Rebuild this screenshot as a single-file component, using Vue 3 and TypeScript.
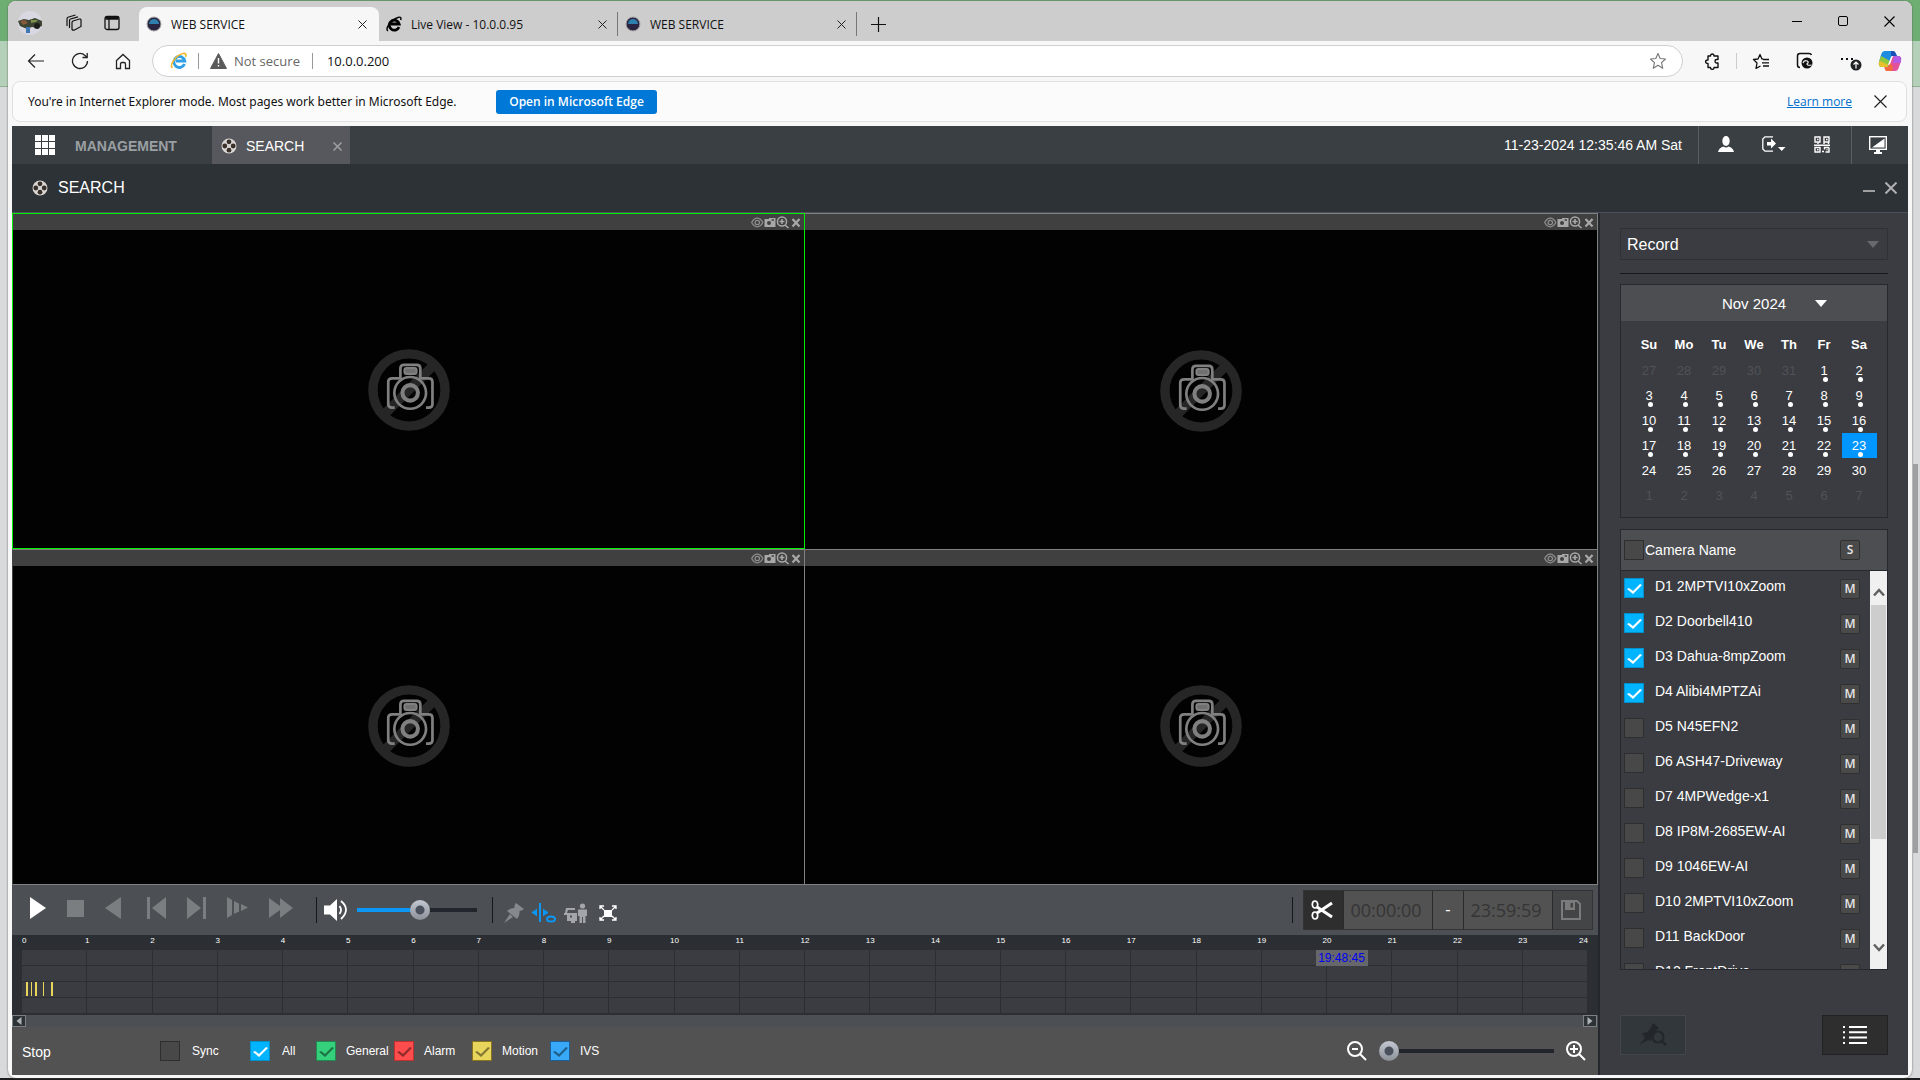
<script setup lang="ts">
import { computed, ref } from 'vue'

interface Camera {
  id: string
  name: string
  checked: boolean
}

interface Day {
  day: number
  out: boolean
  dot: boolean
  selected: boolean
}

const cameras = ref<Camera[]>([
  { id: 'D1', name: '2MPTVI10xZoom', checked: true },
  { id: 'D2', name: 'Doorbell410', checked: true },
  { id: 'D3', name: 'Dahua-8mpZoom', checked: true },
  { id: 'D4', name: 'Alibi4MPTZAi', checked: true },
  { id: 'D5', name: 'N45EFN2', checked: false },
  { id: 'D6', name: 'ASH47-Driveway', checked: false },
  { id: 'D7', name: '4MPWedge-x1', checked: false },
  { id: 'D8', name: 'IP8M-2685EW-AI', checked: false },
  { id: 'D9', name: '1046EW-AI', checked: false },
  { id: 'D10', name: '2MPTVI10xZoom', checked: false },
  { id: 'D11', name: 'BackDoor', checked: false },
  { id: 'D12', name: 'FrontDrive', checked: false },
])

const weekdays = ['Su', 'Mo', 'Tu', 'We', 'Th', 'Fr', 'Sa']

const weeks = computed<Day[][]>(() => {
  const days: Day[] = []
  for (let d = 27; d <= 31; d++) days.push({ day: d, out: true, dot: false, selected: false })
  for (let d = 1; d <= 30; d++) days.push({ day: d, out: false, dot: d <= 23, selected: d === 23 })
  for (let d = 1; d <= 7; d++) days.push({ day: d, out: true, dot: false, selected: false })
  return Array.from({ length: 6 }, (_, i) => days.slice(i * 7, i * 7 + 7))
})

const hours = Array.from({ length: 25 }, (_, i) => i)

// Recorded motion clips, in percent of the day.
const events = [
  { start: 0.26, width: 2 },
  { start: 0.58, width: 1 },
  { start: 0.83, width: 2 },
  { start: 1.34, width: 1 },
  { start: 1.85, width: 2 },
]

const filters = ref([
  { key: 'all', label: 'All', on: true },
  { key: 'general', label: 'General', on: true },
  { key: 'alarm', label: 'Alarm', on: true },
  { key: 'motion', label: 'Motion', on: true },
  { key: 'ivs', label: 'IVS', on: true },
])

const sync = ref(false)
const allCameras = ref(false)
const volume = ref(53)
const zoomLevel = ref(0)
const recordType = ref('Record')
const address = ref('10.0.0.200')
const clipStart = ref('00:00:00')
const clipEnd = ref('23:59:59')
</script>

<template>
  <div class="desktop">
    <div class="window">
      <header class="tabstrip">
        <div class="strip-tools">
          <button class="plain" aria-label="Profile">
            <svg width="26" height="26" viewBox="0 0 26 26">
              <circle cx="13" cy="13" r="12" fill="#d9d8e2" />
              <path d="M1 11 L7 9 L12 10 L18 8 L25 11 V16 L20 18 L15 17 L10 19 L3 16Z" fill="#3c4433" />
              <path d="M3 11 L8 10 L11 13 L6 15Z" fill="#8a5a3c" /><path d="M14 10 L21 10 L19 12 L14 13Z" fill="#7d9248" />
              <circle cx="20" cy="16" r="3" fill="#1c1d1a" /><rect x="9" y="17" width="4" height="6" fill="#3f78b5" />
            </svg>
          </button>
          <button class="plain" aria-label="Workspaces">
            <svg width="18" height="18" viewBox="0 0 18 18" fill="none" stroke="#111" stroke-width="1.2">
              <path d="M8 7 L14.500 5 Q16 4.800 16 6 V12.500 L9.500 16 Q8 16.500 7 15.500 V8.500 Q7 7.500 8 7Z" />
              <path d="M4.500 14 V6.500 Q4.500 5.300 5.500 5 L13 2.800" /><path d="M2 12 V5 Q2 3.500 3 3.200 L10.500 1" />
            </svg>
          </button>
          <button class="plain" aria-label="Tab actions">
            <svg width="16" height="16" viewBox="0 0 16 16" fill="none" stroke="#111" stroke-width="1.300">
              <rect x="1" y="1.500" width="14" height="13" rx="2" /><path d="M1.500 3 H14.500" stroke-width="3.500" /><path d="M5 4 V14" />
            </svg>
          </button>
        </div>
        <nav class="tabs">
          <div class="tab active">
            <svg class="fav" width="16" height="16" viewBox="0 0 16 16"><circle cx="8" cy="8" r="7" fill="#2b2440" stroke="#aaa" /><path d="M3 8 A5 5 0 0 1 13 8Z" fill="#2e7fae" /></svg>
            <span>WEB SERVICE</span>
            <button class="plain tab-x" aria-label="Close tab"><svg width="9" height="9" viewBox="0 0 9 9"><path d="M.5 .5 L8.500 8.500 M8.500 .5 L.5 8.500" stroke="#222" /></svg></button>
          </div>
          <div class="tab live">
            <svg class="fav" width="16" height="16" viewBox="0 0 16 16" fill="none">
              <path d="M13 11 A5 5 0 1 1 13.200 8 H5" stroke="#000" stroke-width="2.800" /><path d="M2 15 C-1 13 4 4 12 1.500 C15 .5 15.500 2 14.500 4" stroke="#000" stroke-width="1.400" />
            </svg>
            <span>Live View - 10.0.0.95</span>
            <button class="plain tab-x" aria-label="Close tab"><svg width="9" height="9" viewBox="0 0 9 9"><path d="M.5 .5 L8.500 8.500 M8.500 .5 L.5 8.500" stroke="#222" /></svg></button>
          </div>
          <div class="tab">
            <svg class="fav" width="16" height="16" viewBox="0 0 16 16"><circle cx="8" cy="8" r="7" fill="#2b2440" stroke="#aaa" /><path d="M3 8 A5 5 0 0 1 13 8Z" fill="#2e7fae" /></svg>
            <span>WEB SERVICE</span>
            <button class="plain tab-x" aria-label="Close tab"><svg width="9" height="9" viewBox="0 0 9 9"><path d="M.5 .5 L8.500 8.500 M8.500 .5 L.5 8.500" stroke="#222" /></svg></button>
          </div>
          <button class="plain new-tab" aria-label="New tab"><svg width="15" height="15" viewBox="0 0 15 15"><path d="M7.500 0 V15 M0 7.500 H15" stroke="#111" stroke-width="1.200" /></svg></button>
        </nav>
        <div class="win-buttons">
          <button class="plain" aria-label="Minimize"><svg width="10" height="10" viewBox="0 0 10 10"><path d="M0 5.500 H10" stroke="#000" /></svg></button>
          <button class="plain" aria-label="Maximize"><svg width="10" height="10" viewBox="0 0 10 10"><rect x=".5" y=".5" width="9" height="9" rx="1.500" fill="none" stroke="#000" /></svg></button>
          <button class="plain" aria-label="Close"><svg width="11" height="11" viewBox="0 0 11 11"><path d="M.5 .5 L10.500 10.500 M10.500 .5 L.5 10.500" stroke="#000" stroke-width="1.100" /></svg></button>
        </div>
      </header>

      <div class="toolbar">
        <div class="nav-buttons">
          <button class="plain" aria-label="Back"><svg width="18" height="16" viewBox="0 0 18 16" fill="none" stroke="#222" stroke-width="1.200"><path d="M17 8 H1.500 M8 1.500 L1.500 8 L8 14.500" /></svg></button>
          <button class="plain" aria-label="Refresh"><svg width="18" height="18" viewBox="0 0 18 18" fill="none" stroke="#222" stroke-width="1.300"><path d="M16.500 9 A7.500 7.500 0 1 1 14 3.400 L16 5.500 M16.200 1 V5.500 H11.500" /></svg></button>
          <button class="plain" aria-label="Home"><svg width="16" height="17" viewBox="0 0 16 17" fill="none" stroke="#222" stroke-width="1.300"><path d="M1.500 7.500 L8 1.500 L14.500 7.500 V15.500 H10.500 V11 Q10.500 9.500 9 9.500 H7 Q5.500 9.500 5.500 11 V15.500 H1.500Z" /></svg></button>
        </div>
        <div class="address">
          <svg width="18" height="18" viewBox="0 0 18 18" fill="none">
            <path d="M14.500 12 A5.500 5.500 0 1 1 14.800 9 H6" stroke="#2f9fe6" stroke-width="2.800" /><path d="M2.500 16 C-1 13 6 3 13 1.500 C16 1 16.500 3 15.500 5" stroke="#f2b92c" stroke-width="1.600" />
          </svg>
          <i class="bar-line"></i>
          <svg class="warn" width="17" height="16" viewBox="0 0 17 16"><path d="M8.500 .5 L16.500 15.500 H.5Z" fill="#5a5a5a" stroke="#5a5a5a" stroke-linejoin="round" /><path d="M8.500 5 V10.500 M8.500 12 V13.500" stroke="#fff" stroke-width="1.400" /></svg>
          <span class="not-secure">Not secure</span>
          <i class="bar-line url-line"></i>
          <input v-model="address" class="url" type="text" aria-label="Address" />
          <button class="plain" aria-label="Add to favorites"><svg width="18" height="18" viewBox="0 0 18 18"><path d="M9 1.500 L11.200 6.500 L16.500 7 L12.500 10.700 L13.700 16.200 L9 13.300 L4.300 16.200 L5.500 10.700 L1.500 7 L6.800 6.500Z" fill="none" stroke="#777" stroke-width="1.100" stroke-linejoin="round" /></svg></button>
        </div>
        <div class="tools">
          <button class="plain" aria-label="Extensions"><svg width="17" height="17" viewBox="0 0 17 17" fill="none" stroke="#111" stroke-width="1.400"><path d="M4 3 H6.500 C6.500 .3 10 .3 10 3 H14 V6.500 H12.500 C10.500 6.500 10.500 10 12.500 10 H14 V14.500 H10 C10 17 6.500 17 6.500 14.500 H4 V10.500 C.8 10.500 .8 7 4 7Z" stroke-linejoin="round" /></svg></button>
          <i class="bar-line"></i>
          <button class="plain" aria-label="Favorites"><svg width="18" height="17" viewBox="0 0 18 17" fill="none" stroke="#111" stroke-width="1.300"><path d="M11 6 L9.800 5.800 L8 1.500 L6 6 L1.500 6.500 L5 10 L4 15.300 L8.500 13" stroke-linejoin="round" /><path d="M11 6.500 H17 M10 9.800 H17 M11 13 H17" /></svg></button>
          <button class="plain" aria-label="Internet Explorer mode"><svg width="18" height="18" viewBox="0 0 18 18" fill="none"><path d="M4 15.500 Q1.500 15.500 1.500 13 V4 Q1.500 1.500 4 1.500 H13 Q15 1.500 15.500 3" stroke="#111" stroke-width="1.500" /><circle cx="11" cy="11" r="5.500" fill="#111" /><path d="M7 11 C8 7.500 13 8.500 12 11 C10 11.500 11 14 15.500 13" stroke="#f7f7f7" stroke-width="1.200" /></svg></button>
          <button class="plain" aria-label="Settings and more"><svg width="22" height="22" viewBox="0 0 22 22"><path d="M1 9 H3 M6 9 H8 M11 9 H13" stroke="#111" stroke-width="2" /><circle cx="16" cy="15" r="5.500" fill="#202124" /><path d="M16 18.500 V12 M13.500 14.500 L16 12 L18.500 14.500" stroke="#fff" fill="none" stroke-width="1.200" /></svg></button>
          <button class="plain" aria-label="Copilot">
            <svg width="24" height="22" viewBox="0 0 24 22">
              <path d="M7 1 H15 Q17 1 18 4 L19 6 H14 L11 15 Q10 17 8 17 H4 Q0 17 1 12 L3 5 Q4 1 7 1Z" fill="#1e8ce0" />
              <path d="M1 12 Q0 17 4 17 H8 Q10 17 11 15 L12 11 L5 7 L3 6Z" fill="#8fc63f" /><path d="M1 12 Q0 17 4 17 H8 Q10 17 10.500 15 L2 11Z" fill="#e8c22c" /><path d="M13 1 H15 Q17 1 18 4 L19 6 H13Z" fill="#1a4fb8" />
              <path d="M10 17 L13 9 Q14 6 16 6 H20 Q24 6 23 11 L21 17 Q20 21 17 21 H9 Q7 21 6.500 17Z" fill="#e2529a" />
              <path d="M16 6 H20 Q24 6 23 11 L22.500 13 H15Z" fill="#b45be6" /><path d="M6.500 17 H10 L12 12 L15 17 L14 21 H9 Q7 21 6.500 17Z" fill="#f36a3e" /><path d="M10 15 L12.500 8 Q13 6 15 6 L12.500 13 Q12 15 10 15Z" fill="#fff" />
            </svg>
          </button>
        </div>
      </div>

      <div class="ie-bar">
        <span class="notice">You're in Internet Explorer mode. Most pages work better in Microsoft Edge.</span>
        <button class="open-edge">Open in Microsoft Edge</button>
        <a href="#" class="learn">Learn more</a>
        <button class="plain" aria-label="Dismiss"><svg width="13" height="13" viewBox="0 0 13 13"><path d="M.5 .5 L12.500 12.500 M12.500 .5 L.5 12.500" stroke="#222" stroke-width="1.200" /></svg></button>
      </div>

      <main class="app">
        <div class="menu">
          <button class="plain launcher" aria-label="Menu">
            <svg width="20" height="20" viewBox="0 0 20 20" fill="#fff"><path d="M0 0h6v6H0z M7 0h6v6H7z M14 0h6v6h-6z M0 7h6v6H0z M7 7h6v6H7z M14 7h6v6h-6z M0 14h6v6H0z M7 14h6v6H7z M14 14h6v6h-6z" /></svg>
          </button>
          <button class="plain management">MANAGEMENT</button>
          <div class="app-tab">
            <svg width="16" height="16" viewBox="0 0 16 16"><circle cx="8" cy="8" r="7.500" fill="#d8d5d2" /><g fill="#3a302a"><circle cx="8" cy="3.800" r="2.400" /><circle cx="8" cy="12.200" r="2.400" /><circle cx="3.800" cy="8" r="2.400" /><circle cx="12.200" cy="8" r="2.400" /></g></svg>
            <span>SEARCH</span>
            <button class="plain" aria-label="Close search"><svg width="9" height="9" viewBox="0 0 9 9"><path d="M.5 .5 L8.500 8.500 M8.500 .5 L.5 8.500" stroke="#a0a0a2" stroke-width="1.500" /></svg></button>
          </div>
          <time class="clock">11-23-2024 12:35:46 AM Sat</time>
          <div class="menu-icons">
            <button class="plain" aria-label="User"><svg width="16" height="16" viewBox="0 0 16 16" fill="#fff"><ellipse cx="8" cy="5" rx="3.700" ry="5" /><path d="M0 16 Q1 11.500 5.500 10.500 Q8 12.500 10.500 10.500 Q15 11.500 16 16Z" /></svg></button>
            <button class="plain" aria-label="Log out"><svg width="24" height="16" viewBox="0 0 24 16"><path d="M11 .8 H3 L.8 3 V13 L3 15.200 H11" fill="none" stroke="#fff" stroke-width="1.300" /><path d="M5 6 H9 V2.500 L14 7.500 L9 12.500 V9.500 H5Z M16 11 H23.500 L19.700 15Z" fill="#fff" /></svg></button>
            <button class="plain" aria-label="QR code"><svg width="16" height="17" viewBox="0 0 16 17" fill="none" stroke="#fff" stroke-width="1.400"><path d="M1 1 H6 V6 H1Z M10 1 H15 V6 H10Z M3 3.500 H4.500 M12 3.500 H13.500 M4 8 V6 M10 8 V6 M14.500 8 V6 M0 9.200 H16 M1 11.500 H6 V16 H1Z M3 13.800 H4.500 M15 11.500 H10.500 V13.500 M15 11.500 V16 H11.500 M8 15.500 H10 M12.500 13.800 H13.500" /></svg></button>
          </div>
          <button class="plain screen" aria-label="Screen"><svg width="18" height="18" viewBox="0 0 18 18"><rect x=".7" y=".7" width="16.600" height="12.600" fill="none" stroke="#fff" stroke-width="1.400" /><path d="M15.500 2.500 V11.500 H3Z M7 13 H11 V16 H13 V18 H5 V16 H7Z" fill="#fff" /></svg></button>
        </div>

        <div class="page-title">
          <svg width="16" height="16" viewBox="0 0 16 16"><circle cx="8" cy="8" r="7.500" fill="#d8d5d2" /><g fill="#3a302a"><circle cx="8" cy="3.800" r="2.400" /><circle cx="8" cy="12.200" r="2.400" /><circle cx="3.800" cy="8" r="2.400" /><circle cx="12.200" cy="8" r="2.400" /></g></svg>
          <h1>SEARCH</h1>
          <button class="plain" aria-label="Minimize page"><svg width="12" height="12" viewBox="0 0 12 12"><path d="M0 9 H12" stroke="#a0a0a0" stroke-width="2" /></svg></button>
          <button class="plain" aria-label="Close page"><svg width="12" height="12" viewBox="0 0 12 12"><path d="M.5 .5 L11.500 11.500 M11.500 .5 L.5 11.500" stroke="#b0b0b0" stroke-width="2" /></svg></button>
        </div>

        <div class="content">
          <section class="player">
            <div class="videos">
              <div v-for="n in 4" :key="n" class="cell" :class="{ selected: n === 1 }">
                <div class="cell-head">
                  <svg width="50" height="13" viewBox="0 0 50 13" fill="none" stroke="#a8a8a8">
                    <path d="M.7 6.500 Q3 2.200 6.300 2.200 Q9.500 2.200 11.800 6.500 Q9.500 10.800 6.300 10.800 Q3 10.800 .7 6.500Z" stroke="#8c8c8c" stroke-width="1.300" /><circle cx="6.300" cy="6.500" r="2.200" stroke="#8c8c8c" stroke-width="1.300" />
                    <path d="M13.500 3 H18 V2 H24.500 V11 H13.500Z" fill="#a8a8a8" stroke="none" /><circle cx="18" cy="7" r="2" fill="#404040" stroke="none" /><path d="M20.500 4 H23" stroke="#404040" stroke-width="1.500" />
                    <circle cx="31" cy="5.500" r="4.600" stroke-width="1.500" /><path d="M28.500 5.500 H33.500 M31 3 V8 M34 9 L37.500 12" stroke-width="1.600" /><path d="M41.500 3 L48.500 10.500 M48.500 3 L41.500 10.500" stroke-width="2.200" />
                  </svg>
                </div>
                <div class="cell-body">
                  <svg width="82" height="82" viewBox="84 60 243 243" fill="none">
                    <circle cx="205.500" cy="181.500" r="107" stroke="#262626" stroke-width="28" /><path d="M134 252 L277 109" stroke="#262626" stroke-width="28" />
                    <path d="M163 234 H156 Q144 234 144 224 V158 Q144 147 156 147 H180 V118 Q180 107 191 107 H228 Q239 107 239 118 V147 H264 Q275 147 275 158 V224 Q275 234 264 234 H256" stroke="#808080" stroke-width="8" />
                    <rect x="192" y="116" width="36" height="18" rx="6" stroke="#808080" stroke-width="6" fill="#707070" /><circle cx="209" cy="190" r="47" stroke="#808080" stroke-width="8" /><circle cx="209" cy="190" r="23" stroke="#808080" stroke-width="12" />
                  </svg>
                </div>
              </div>
            </div>

            <div class="controls">
              <div class="transport">
                <button class="plain" aria-label="Play"><svg width="16" height="22" viewBox="0 0 16 22"><path d="M0 0 L16 11 L0 22Z" fill="#fff" /></svg></button>
                <button class="plain" aria-label="Stop"><svg width="17" height="17" viewBox="0 0 17 17"><path d="M0 0h17v17H0z" fill="#7b7e80" /></svg></button>
                <button class="plain" aria-label="Play backward"><svg width="16" height="22" viewBox="0 0 16 22"><path d="M16 0 L0 11 L16 22Z" fill="#7b7e80" /></svg></button>
                <button class="plain" aria-label="Previous frame"><svg width="24" height="22" viewBox="-5 0 24 22"><path d="M19 0 L5 11 L19 22Z M0 0H3V22H0Z" fill="#7b7e80" /></svg></button>
                <button class="plain" aria-label="Next frame"><svg width="19" height="22" viewBox="0 0 19 22"><path d="M0 0 L14 11 L0 22Z M16 0H19V22H16Z" fill="#7b7e80" /></svg></button>
                <button class="plain" aria-label="Slow"><svg width="21" height="22" viewBox="0 0 21 22"><path d="M0 0 L5 3 V18 L0 21Z M7 4 L12 6.500 V14.500 L7 17Z M14 7 L21 10.500 L14 14Z" fill="#7b7e80" /></svg></button>
                <button class="plain" aria-label="Fast"><svg width="24" height="20" viewBox="0 0 24 20"><path d="M0 0 L11 8 V0 L24 10 L11 20 V12 L0 20Z" fill="#7b7e80" /></svg></button>
              </div>
              <i class="sep"></i>
              <button class="plain speaker" aria-label="Mute"><svg width="24" height="22" viewBox="0 0 24 22"><path d="M0 6.500 H6 L13 0 V22 L6 15.500 H0Z" fill="#fff" /><path d="M15.500 7 Q18.500 11 15.500 15 M17 2 Q27 10.500 17 20" fill="none" stroke="#fff" stroke-width="1.800" /></svg></button>
              <input v-model="volume" class="range volume" type="range" min="0" max="100" aria-label="Volume" />
              <i class="sep"></i>
              <div class="extras">
                <button class="plain" aria-label="Pin"><svg width="20" height="20" viewBox="0 0 20 20" fill="#85888c"><path d="M12 0 L20 6 Q18 8 15.500 8 Q16 12 13 16 L3 8 Q6 5 10.500 5 Q10 2 12 0Z M6 11 L9 14 L0 20Z" /></svg></button>
                <button class="plain" aria-label="Mark"><svg width="24" height="20" viewBox="0 0 24 20" fill="none" stroke="#0c96f5" stroke-width="2"><path d="M8 0 V19 M0 9.500 H5 M11 9.500 H16" /><path d="M5 5.500 L0 9.500 L5 13.500Z M11 5.500 L16 9.500 L11 13.500Z" fill="#0c96f5" stroke="none" /><ellipse cx="19" cy="16" rx="4" ry="2.500" /></svg></button>
                <button class="plain" aria-label="Smart search"><svg width="23" height="20" viewBox="0 0 23 20"><g fill="#a3a5aa"><circle cx="18.500" cy="3" r="2.600" /><path d="M14 6.500 H23 V13 H21.500 V20 H19 V14 H18 V20 H15.500 V13 H14Z M2 5 H11 V7 H4 L3 10 H13 V18 H11 V20 H7 V18 H3 V12 H0 V10 H1Z" /></g><path d="M6 13.500 H8 M9 7.500 V10" stroke="#4c5054" stroke-width="2" /></svg></button>
                <button class="plain" aria-label="Full screen"><svg width="18" height="16" viewBox="0 0 18 16"><path d="M5 5h8v7H5z" fill="#fff" /><path d="M1 4 V1 H5 M1 1 L5 5 M13 1 H17 V4 M17 1 L13 5 M1 12 V15 H5 M1 15 L5 11 M17 12 V15 H13 M17 15 L13 11" fill="none" stroke="#fff" stroke-width="1.300" /></svg></button>
              </div>
              <i class="sep clip-sep"></i>
              <div class="clip">
                <button class="cut" aria-label="Cut"><svg width="22" height="20" viewBox="0 0 22 20" fill="none" stroke="#fff"><ellipse cx="4" cy="4.500" rx="2.700" ry="3.500" stroke-width="1.700" /><ellipse cx="4" cy="15.500" rx="2.700" ry="3.500" stroke-width="1.700" /><path d="M6 7 L21 17 M6 13 L21 3" stroke-width="3" /></svg></button>
                <input v-model="clipStart" type="text" aria-label="Clip start" disabled />
                <span class="dash">-</span>
                <input v-model="clipEnd" type="text" aria-label="Clip end" disabled />
                <button class="save" aria-label="Save clip" disabled><svg width="20" height="20" viewBox="0 0 20 20"><path d="M1 1 H16 L19 4 V19 H1Z" fill="none" stroke="#7b7b7b" stroke-width="2" /><path d="M4 2 H14 V10 H4Z" fill="#7b7b7b" /><path d="M9.500 3 H12 V7.500 H9.500Z" fill="#444" /></svg></button>
              </div>
            </div>

            <div class="timeline">
              <div class="labels"><span v-for="h in hours" :key="h">{{ h }}</span></div>
              <div class="tracks">
                <div v-for="r in 4" :key="r" class="track">
                  <i v-for="c in 24" :key="c" class="slot"></i>
                  <template v-if="r === 3">
                    <b v-for="e in events" :key="e.start" class="event" :style="{ left: e.start + '%', width: e.width + 'px' }"></b>
                  </template>
                </div>
                <span class="cursor-time">19:48:45</span>
              </div>
              <div class="hscroll">
                <button class="plain" aria-label="Scroll left"><svg width="6" height="8" viewBox="0 0 6 8"><path d="M5.500 0 V8 L.5 4Z" fill="#aeb2b6" /></svg></button>
                <button class="plain" aria-label="Scroll right"><svg width="6" height="8" viewBox="0 0 6 8"><path d="M.5 0 V8 L5.500 4Z" fill="#aeb2b6" /></svg></button>
              </div>
            </div>

            <div class="footer">
              <span class="status">Stop</span>
              <label class="sync"><input v-model="sync" type="checkbox" class="box" />Sync</label>
              <label v-for="f in filters" :key="f.key" :class="['filter', f.key]"><input v-model="f.on" type="checkbox" class="box" />{{ f.label }}</label>
              <div class="zoom">
                <button class="plain" aria-label="Zoom out"><svg width="20" height="20" viewBox="0 0 20 20" fill="none" stroke="#fff" stroke-width="2"><circle cx="8" cy="8" r="7" /><path d="M5 8 H11 M13 13 L19 19" /></svg></button>
                <input v-model="zoomLevel" class="range" type="range" min="0" max="100" aria-label="Timeline zoom" />
                <button class="plain" aria-label="Zoom in"><svg width="20" height="20" viewBox="0 0 20 20" fill="none" stroke="#fff" stroke-width="2"><circle cx="8" cy="8" r="7" /><path d="M4 8 H12 M8 4 V12 M13 13 L19 19" /></svg></button>
              </div>
            </div>
          </section>

          <aside class="sidebar">
            <select v-model="recordType" class="type" aria-label="Type"><option>Record</option><option>Picture</option></select>
            <hr />
            <div class="calendar">
              <button class="month"><span>Nov 2024</span><svg width="12" height="7" viewBox="0 0 12 7"><path d="M0 0 H12 L6 7Z" fill="#fff" /></svg></button>
              <table>
                <thead><tr><th v-for="w in weekdays" :key="w" scope="col">{{ w }}</th></tr></thead>
                <tbody>
                  <tr v-for="(week, i) in weeks" :key="i">
                    <td v-for="(d, j) in week" :key="j" :class="{ out: d.out, dot: d.dot, picked: d.selected }">{{ d.day }}</td>
                  </tr>
                </tbody>
              </table>
            </div>

            <div class="cameras">
              <div class="cam-head">
                <label><input v-model="allCameras" type="checkbox" class="box" />Camera Name</label>
                <button class="mini">S</button>
              </div>
              <div class="cam-body">
                <ul>
                  <li v-for="c in cameras" :key="c.id">
                    <label><input v-model="c.checked" type="checkbox" class="box" /><span>{{ c.id }} {{ c.name }}</span></label>
                    <button class="mini">M</button>
                  </li>
                </ul>
                <div class="vscroll">
                  <button class="plain" aria-label="Scroll up"><svg width="12" height="9" viewBox="0 0 12 9"><path d="M1 7.500 L6 2 L11 7.500" fill="none" stroke="#606060" stroke-width="2.500" /></svg></button>
                  <div class="lane"><div class="thumb"></div></div>
                  <button class="plain" aria-label="Scroll down"><svg width="12" height="9" viewBox="0 0 12 9"><path d="M1 1.500 L6 7 L11 1.500" fill="none" stroke="#606060" stroke-width="2.500" /></svg></button>
                </div>
              </div>
            </div>

            <div class="side-actions">
              <button class="tag" aria-label="Search marks" disabled><svg width="28" height="24" viewBox="0 0 28 24"><path d="M14 0 L20 5 Q17 7 17 9 Q12 11 12 18 L9 17 L0 22 L6 15 L3 10 Q9 10 11 6Z" fill="#23272b" /><circle cx="19" cy="14" r="5.500" fill="none" stroke="#23272b" stroke-width="2.200" /><path d="M23 18 L27 22" stroke="#23272b" stroke-width="2.500" /></svg></button>
              <button class="list" aria-label="File list"><svg width="24" height="18" viewBox="0 0 24 18"><path d="M6 1 H24 M6 6.300 H24 M6 11.600 H24 M6 17 H24 M0 1 H2 M0 6.300 H2 M0 11.600 H2 M0 17 H2" stroke="#fff" stroke-width="2" /></svg></button>
            </div>
          </aside>
        </div>
      </main>
    </div>
    <div class="page-thumb"></div>
  </div>
</template>

<style>
body {
  margin: 0;
}
</style>

<style scoped>
* {
  box-sizing: border-box;
}

.desktop {
  position: relative;
  display: flex;
  min-height: 100vh;
  padding: 1px 8px 2px;
  background: linear-gradient(#6fae73 0 41px, #b5d0b8 41px 86px, #8fb092 86px 87px, #d8d9db 87px calc(100% - 2px), #1c1c1c calc(100% - 2px));
  font-family: "Liberation Sans", Arial, sans-serif;
  color: #fff;
}

.page-thumb {
  position: absolute;
  right: 2px;
  top: 43%;
  width: 5px;
  height: 36%;
  background: #9f9f9f;
}

.window {
  flex: 1;
  min-width: 0;
  display: flex;
  flex-direction: column;
  overflow: hidden;
  border-radius: 8px;
  background: #f7f7f7;
  box-shadow: 0 0 2px #555;
}

.plain {
  display: flex;
  align-items: center;
  justify-content: center;
  padding: 0;
  border: 0;
  background: none;
  color: inherit;
  font: inherit;
}

svg {
  display: block;
  flex: none;
}

/* Browser chrome */
.tabstrip,
.toolbar,
.ie-bar {
  font-family: "Open Sans", "Segoe UI", sans-serif;
  font-size: 12px;
  color: #111;
}

.tabstrip {
  display: flex;
  height: 40px;
  background: #cdcdcd;
}

.strip-tools {
  display: flex;
  align-items: center;
  justify-content: space-between;
  width: 131px;
  padding: 4px 19px 0 9px;
}

.tabs {
  flex: 1;
  display: flex;
  align-items: center;
  padding-top: 6px;
}

.tab {
  display: flex;
  align-items: center;
  gap: 9px;
  width: 239px;
  height: 24px;
  padding: 0 10px 0 7px;
  border-right: 1px solid #777;
}

.tab.active {
  width: 240px;
  height: 34px;
  padding: 0 12px 0 7px;
  border: 0;
  border-radius: 8px 8px 0 0;
  background: #f7f7f7;
}

.tab-x {
  margin-left: auto;
}

.new-tab {
  margin-left: 14px;
}

.win-buttons {
  display: flex;
}

.win-buttons button {
  width: 46px;
}

.toolbar {
  display: flex;
  align-items: center;
  height: 40px;
  font-size: 13px;
}

.nav-buttons {
  display: flex;
  gap: 26px;
  width: 144px;
  padding-left: 19px;
}

.address {
  flex: 1;
  display: flex;
  align-items: center;
  height: 32px;
  padding: 0 15px 0 17px;
  border: 1px solid #cfcfcf;
  border-radius: 16px;
  background: #fff;
}

.bar-line {
  width: 1px;
  height: 16px;
  margin: 0 11px 0 10px;
  background: #999;
}

.not-secure {
  margin-left: 7px;
  color: #666;
}

.url-line {
  margin: 0 14px 0 12px;
}

.url {
  flex: 1;
  min-width: 0;
  padding: 0;
  border: 0;
  outline: 0;
  background: none;
  color: #111;
  font: inherit;
}

.tools {
  display: flex;
  align-items: center;
  padding: 0 10px 0 21px;
}

.tools .bar-line {
  margin: 0 15px;
  background: #ccc;
}

.tools button + button {
  margin-left: 26px;
}

.tools button:nth-last-child(1) {
  margin-left: 16px;
}

.ie-bar {
  display: flex;
  align-items: center;
  height: 41px;
  margin: 0 5px 4px 4px;
  padding: 0 19px 0 15px;
  border: 1px solid #e0e0e0;
  border-radius: 8px;
  background: #fbfbfb;
}

.notice {
  min-width: 436px;
  font-family: "Noto Sans", "Segoe UI", sans-serif;
}

.open-edge {
  width: 161px;
  height: 24px;
  margin-left: 32px;
  padding: 0;
  border: 0;
  border-radius: 3px;
  background: #0078d7;
  color: #fff;
  font: 600 12px/24px "Open Sans", "Segoe UI", sans-serif;
}

.learn {
  margin-left: auto;
  margin-right: 22px;
  color: #0070cc;
}

/* Recorder application */
.app {
  flex: 1;
  display: flex;
  flex-direction: column;
  margin: 0 4px 3px;
  background: #2d3236;
}

.menu {
  display: flex;
  align-items: stretch;
  height: 38px;
  background: #3a3f43;
  font-size: 14px;
}

.launcher {
  margin-left: 23px;
}

.management {
  width: 157px;
  justify-content: flex-start;
  padding: 2px 0 0 20px;
  color: #9a9fa3;
  font-weight: bold;
}

.app-tab {
  display: flex;
  align-items: center;
  width: 138px;
  padding: 2px 8px 0 9px;
  background: #57585d;
}

.app-tab span {
  flex: 1;
  padding-left: 9px;
}

.clock {
  margin-left: auto;
  padding-right: 16px;
  line-height: 38px;
}

.menu-icons {
  display: flex;
  align-items: center;
  gap: 28px;
  width: 154px;
  padding: 0 0 2px 19px;
  border-left: 1px solid #5b5f63;
  border-right: 1px solid #5b5f63;
}

.screen {
  width: 56px;
  padding-right: 4px;
}

.page-title {
  display: flex;
  align-items: center;
  gap: 10px;
  height: 49px;
  padding: 0 11px 0 20px;
  border-bottom: 1px solid #4b505c;
}

.page-title h1 {
  flex: 1;
  margin: 0;
  font-size: 16px;
  font-weight: normal;
}

.content {
  flex: 1;
  display: flex;
}

.player {
  flex: 1;
  min-width: 0;
  display: flex;
  flex-direction: column;
}

.videos {
  flex: 1;
  display: grid;
  grid-template: 1fr 1fr / 1fr 1fr;
}

.cell {
  display: flex;
  flex-direction: column;
  border: solid #808080;
  border-width: 1px 1px 0 0;
}

.cell:nth-child(odd) {
  border-left: 1px solid #444;
}

.cell:nth-child(n + 3) {
  border-bottom-width: 1px;
}

.cell.selected {
  border: 1px solid #00f000;
}

.cell-head {
  display: flex;
  justify-content: flex-end;
  align-items: center;
  height: 16px;
  padding-right: 3px;
  background: #404040;
}

.cell-body {
  flex: 1;
  display: flex;
  align-items: center;
  justify-content: center;
  min-height: 100px;
  padding-top: 2px;
  background: #020202;
}

.controls {
  display: flex;
  align-items: center;
  height: 50px;
  background: #4c5054;
}

.transport {
  display: flex;
  align-items: center;
  gap: 21px;
  width: 304px;
  padding: 0 0 4px 18px;
}

.sep {
  width: 1px;
  height: 26px;
  background: #15181a;
}

.speaker {
  margin: 0 9px 0 7px;
}

.range {
  appearance: none;
  height: 20px;
  margin: 0;
  background: linear-gradient(#22262c, #22262c) center / 100% 4px no-repeat;
}

.range::-webkit-slider-thumb {
  appearance: none;
  width: 20px;
  height: 20px;
  border-radius: 50%;
  background: radial-gradient(circle, #4b515c 0 4px, transparent 5px), linear-gradient(#c4c8d2, #8c9097);
}

.volume {
  width: 120px;
  margin-right: 15px;
  background: linear-gradient(90deg, #0c96f5 53%, #22262c 53%) center / 100% 4px no-repeat;
}

.extras {
  display: flex;
  align-items: center;
  gap: 8px;
  padding: 6px 0 0 11px;
}

.extras button:last-child {
  margin-left: 4px;
}

.clip-sep {
  margin-left: auto;
}

.clip {
  display: flex;
  height: 40px;
  margin: 0 5px 0 10px;
  border: 1px solid #333;
  background: #525252;
}

.clip button,
.clip input,
.dash {
  display: flex;
  align-items: center;
  justify-content: center;
  padding: 0 4px 0 0;
  border: 0;
  border-right: 1px solid #2b2b2b;
  background: none;
}

.clip input {
  width: 89px;
  color: #353535;
  text-align: center;
  font: 18px "Open Sans", "Segoe UI", sans-serif;
}

.clip .dash {
  width: 31px;
  padding: 0;
  font-size: 16px;
}

.clip .cut {
  width: 40px;
  background: #2e2e2e;
}

.clip .save {
  width: 39px;
  border-right: 0;
  background: #444547;
}

.timeline {
  background: #2b2e33;
}

.labels {
  display: flex;
  justify-content: space-between;
  height: 15px;
  margin: 0 10px;
  font-size: 8px;
  line-height: 11px;
}

.labels span {
  display: flex;
  justify-content: center;
  width: 0;
}

.labels span:first-child {
  justify-content: flex-start;
}

.labels span:last-child {
  justify-content: flex-end;
}

.tracks {
  position: relative;
  margin: 0 10px;
}

.track {
  position: relative;
  display: flex;
  height: 16px;
  border-bottom: 1px solid #2b2e33;
}

.slot {
  flex: 1;
  border-right: 1px solid #2b2e33;
  background: #3a3c41;
}

.event {
  position: absolute;
  top: 0;
  height: 14px;
  background: #e8d65c;
}

.cursor-time {
  position: absolute;
  left: 82.6%;
  top: 0;
  width: 52px;
  background: #66676b;
  color: #0000f0;
  text-align: center;
  font-size: 12px;
  line-height: 16px;
}

.hscroll {
  display: flex;
  justify-content: space-between;
  margin-top: 1px;
  padding-right: 1px;
  background: #4c5054;
}

.hscroll button {
  width: 14px;
  height: 12px;
  border: 1px solid #7c8084;
  background: #2d3236;
}

.footer {
  display: flex;
  align-items: center;
  height: 48px;
  padding: 0 12px 0 10px;
  background: #525252;
  font-size: 12px;
}

.footer label {
  display: flex;
  align-items: center;
  gap: 10px;
  width: 78px;
}

.status {
  width: 138px;
  padding-top: 2px;
  font-size: 14px;
}

.footer .sync {
  width: 90px;
  gap: 12px;
}

.footer .all {
  width: 66px;
  gap: 12px;
}

.box {
  appearance: none;
  flex: none;
  width: 20px;
  height: 20px;
  margin: 0;
  border: 1px solid #2e2e2e;
  background: #484848;
  color: #fff;
}

.box:checked {
  border-color: #0091cc;
  background: #00b4ff;
}

.box:checked::after {
  content: "";
  display: block;
  width: 18px;
  height: 18px;
  background: currentColor;
  clip-path: polygon(2px 10px, 4px 9px, 8px 12px, 15px 5px, 17px 6px, 8px 15px);
}

.general .box:checked {
  border-color: #208a50;
  background: #35d07c;
  color: #1d7546;
}

.alarm .box:checked {
  border-color: #c03030;
  background: #ff4c4c;
  color: #8e2a2a;
}

.motion .box:checked {
  border-color: #8a7420;
  background: #e8d65c;
  color: #827833;
}

.ivs .box:checked {
  border-color: #1c5f98;
  background: #38a8f8;
  color: #205e8b;
}

.zoom {
  display: flex;
  align-items: center;
  gap: 12px;
  margin-left: auto;
}

.zoom .range {
  width: 175px;
}

/* Sidebar */
.sidebar {
  display: flex;
  flex-direction: column;
  width: 310px;
  padding: 15px 20px 20px;
  border-left: 2px solid #24272d;
  background: #3a3c41;
}

.type {
  appearance: none;
  width: 100%;
  height: 32px;
  padding: 0 6px;
  border: 1px solid #2f3136;
  border-radius: 0;
  background: url("data:image/svg+xml,%3Csvg xmlns='http://www.w3.org/2000/svg' width='12' height='7'%3E%3Cpath d='M0 0H12L6 7Z' fill='%2366696d'/%3E%3C/svg%3E") no-repeat right 8px center;
  color: #fff;
  font: 16px "Liberation Sans", Arial, sans-serif;
}

hr {
  width: 100%;
  height: 1px;
  margin: 13px 0 10px;
  border: 0;
  background: #15181c;
}

.calendar,
.cameras {
  border: 1px solid #25282e;
}

.calendar {
  padding-bottom: 9px;
}

.month {
  position: relative;
  display: flex;
  align-items: center;
  justify-content: center;
  width: 100%;
  height: 36px;
  padding: 0;
  border: 0;
  background: #4c4e52;
  color: #fff;
  font: 15px "Liberation Sans", Arial, sans-serif;
}

.month svg {
  position: absolute;
  right: 60px;
}

table {
  margin: 12px auto 0;
  border-collapse: collapse;
  table-layout: fixed;
  width: 245px;
  font-size: 13px;
}

th,
td {
  position: relative;
  height: 25px;
  padding: 0;
  text-align: center;
}

th {
  padding-bottom: 2px;
}

.out {
  color: #505257;
}

.dot::after {
  content: "";
  position: absolute;
  left: 16px;
  bottom: 1px;
  width: 5px;
  height: 5px;
  border-radius: 50%;
  background: #fff;
}

.picked {
  background: #0096ff;
}

.cameras {
  flex: 1;
  display: flex;
  flex-direction: column;
  min-height: 200px;
  margin-top: 11px;
  font-size: 14px;
}

.cam-head {
  display: flex;
  align-items: center;
  justify-content: space-between;
  height: 41px;
  padding: 0 27px 0 3px;
  border-bottom: 1px solid #25282e;
  background: #4c4e52;
}

.cameras label {
  display: flex;
  align-items: center;
  gap: 1px;
}

.mini {
  width: 20px;
  height: 20px;
  padding: 0;
  border: 1px solid #303030;
  border-radius: 2px;
  background: #4a4a4a;
  color: #e8e8e8;
  font: 600 12px/18px "Open Sans", "Segoe UI", sans-serif;
}

.cam-body {
  flex: 1 1 0;
  display: flex;
  min-height: 0;
  overflow: hidden;
}

ul {
  flex: 1;
  margin: 0;
  padding: 0;
  list-style: none;
}

li {
  display: flex;
  align-items: center;
  justify-content: space-between;
  height: 35px;
  padding: 0 10px 0 3px;
}

li label {
  height: 34px;
  align-self: flex-start;
}

li label span {
  padding: 0 0 4px 10px;
}

.vscroll {
  display: flex;
  flex-direction: column;
  width: 17px;
  background: #f0f0f0;
}

.vscroll button {
  height: 44px;
}

.vscroll button:first-child {
  height: 34px;
  padding-top: 8px;
}

.lane {
  flex: 1;
  padding: 0 1px;
}

.thumb {
  height: 73%;
  background: #cdcdcd;
}

.side-actions {
  display: flex;
  justify-content: space-between;
  margin-top: 45px;
}

.side-actions button {
  display: flex;
  align-items: center;
  justify-content: center;
  width: 66px;
  height: 40px;
  padding: 0;
  border: 1px solid #222;
  background: #2e2e2e;
}

.side-actions .tag {
  border-color: #43464b;
  background: #32373b;
}
</style>
